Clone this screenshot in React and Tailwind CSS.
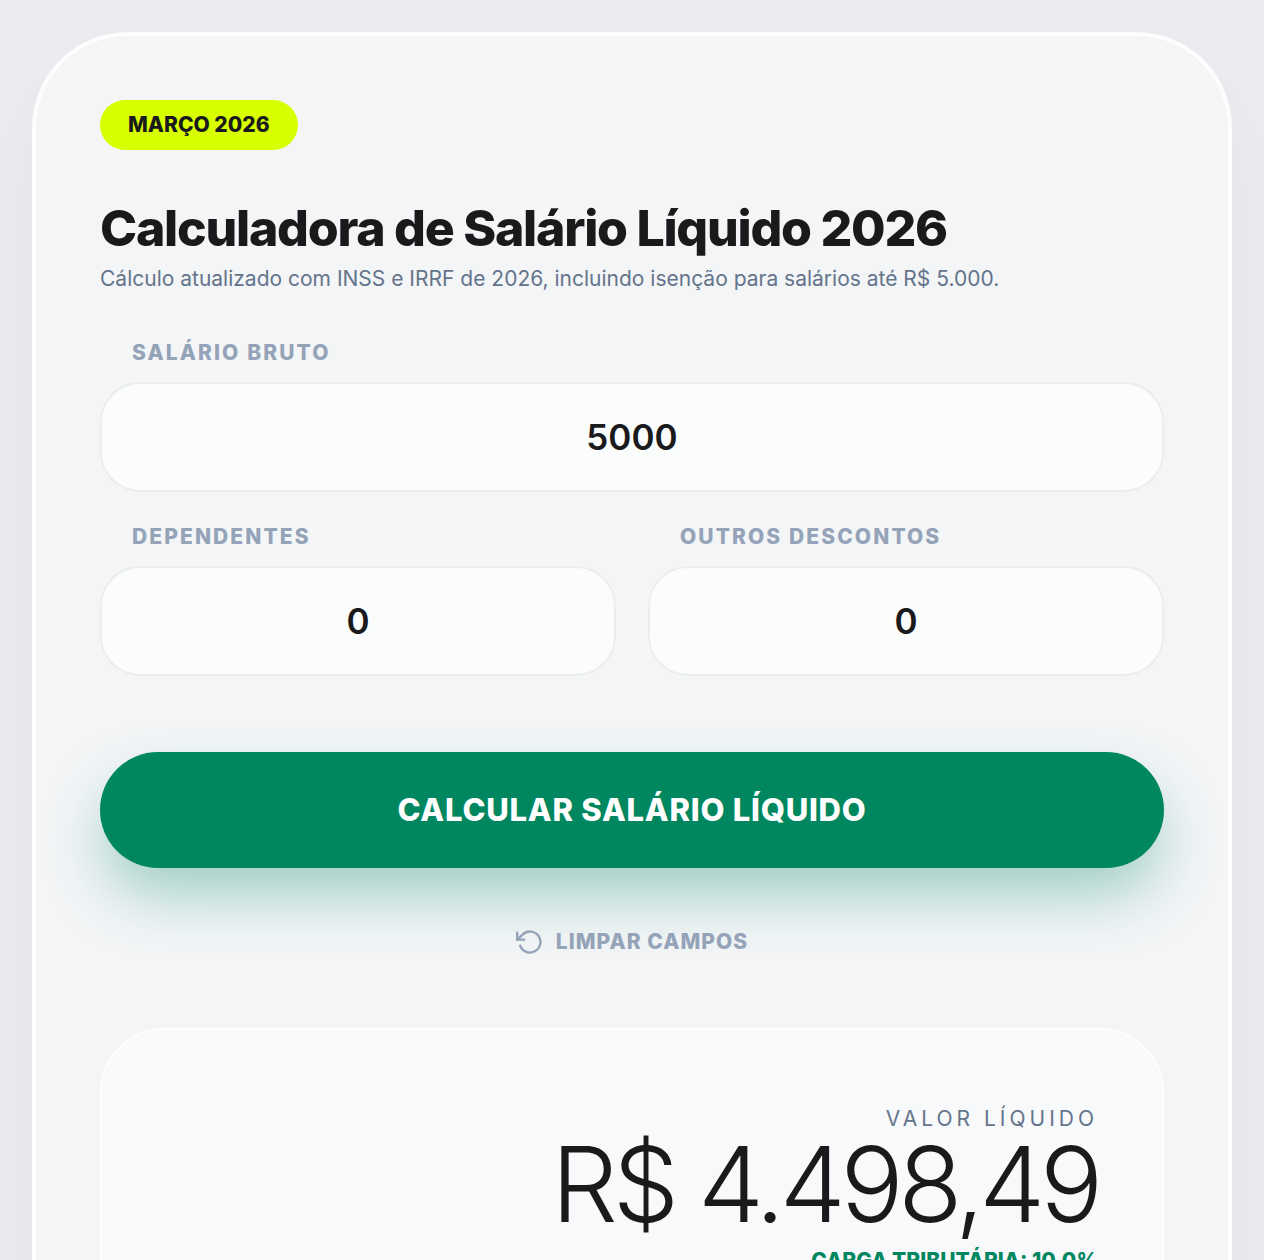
import React, { useState } from 'react';
import { FiRotateCcw } from 'react-icons/fi';

const labelStyle = 'mb-4 block pl-8 text-[21px] leading-[26px] font-extrabold uppercase tracking-widest text-[#94a3b8]';
const inputStyle =
  'block h-[110px] w-full rounded-[40px] border-2 border-[#eceeee] bg-[#fbfdfc] px-8 text-center text-[35px] font-semibold text-[#1a1a1c] outline-none';

const Field = ({ id, label, value, onChange }) => (
  <div>
    <label htmlFor={id} className={labelStyle}>
      {label}
    </label>
    <input id={id} inputMode="decimal" className={inputStyle} value={value} onChange={(e) => onChange(e.target.value)} />
  </div>
);

export const App = () => {
  const [salary, setSalary] = useState('5000');
  const [dependents, setDependents] = useState('0');
  const [discounts, setDiscounts] = useState('0');

  const handleClear = () => {
    setSalary('');
    setDependents('0');
    setDiscounts('0');
  };

  return (
    <div className="min-h-screen bg-[#ebecf0] p-8 font-['Inter',sans-serif] text-[#1a1a1c]">
      <main className="rounded-[96px] border-4 border-[#fcfdfd] bg-[#f3f5f7] p-16 shadow-[0_40px_80px_rgba(0,0,0,0.04)]">
        <span className="inline-flex h-[50px] items-center rounded-full bg-[#d7ff00] px-7 text-[21px] font-extrabold uppercase">
          Março 2026
        </span>

        <h1 className="mt-12 text-[50px] leading-[60px] font-extrabold tracking-tight">Calculadora de Salário Líquido 2026</h1>
        <p className="mt-2 text-[21px] leading-[26px] text-[#64748b]">
          Cálculo atualizado com INSS e IRRF de 2026, incluindo isenção para salários até R$ 5.000.
        </p>

        <div className="mt-12 space-y-8">
          <Field id="salary" label="Salário bruto" value={salary} onChange={setSalary} />
          <div className="grid grid-cols-2 gap-8">
            <Field id="dependents" label="Dependentes" value={dependents} onChange={setDependents} />
            <Field id="discounts" label="Outros descontos" value={discounts} onChange={setDiscounts} />
          </div>
        </div>

        <button
          type="button"
          className="mt-[76px] h-[116px] w-full rounded-full bg-[#00875f] text-[31px] font-extrabold uppercase tracking-wide text-white shadow-[0_30px_60px_-4px_rgba(0,135,95,0.35)]"
        >
          Calcular salário líquido
        </button>

        <button
          type="button"
          onClick={handleClear}
          className="mx-auto mt-11 flex items-center gap-3 py-4 text-[21px] leading-[26px] font-extrabold uppercase tracking-wider text-[#94a3b8]"
        >
          <FiRotateCcw className="size-7" />
          Limpar campos
        </button>

        {/* Result */}
        <section className="mt-14 rounded-[64px] border-2 border-[#fcfdfd] bg-[#f8f9fb] p-16 text-right">
          <h2 className="mt-3 text-[21px] leading-[26px] tracking-[4px] uppercase text-[#64748b]">Valor líquido</h2>
          <p className="text-[105px] leading-[104px] font-light tracking-tighter">R$ 4.498,49</p>
          <p className="mt-3 text-[21px] leading-[26px] font-extrabold uppercase text-[#00875f]">Carga tributária: 10.0%</p>
        </section>
      </main>
    </div>
  );
};
export default App;
